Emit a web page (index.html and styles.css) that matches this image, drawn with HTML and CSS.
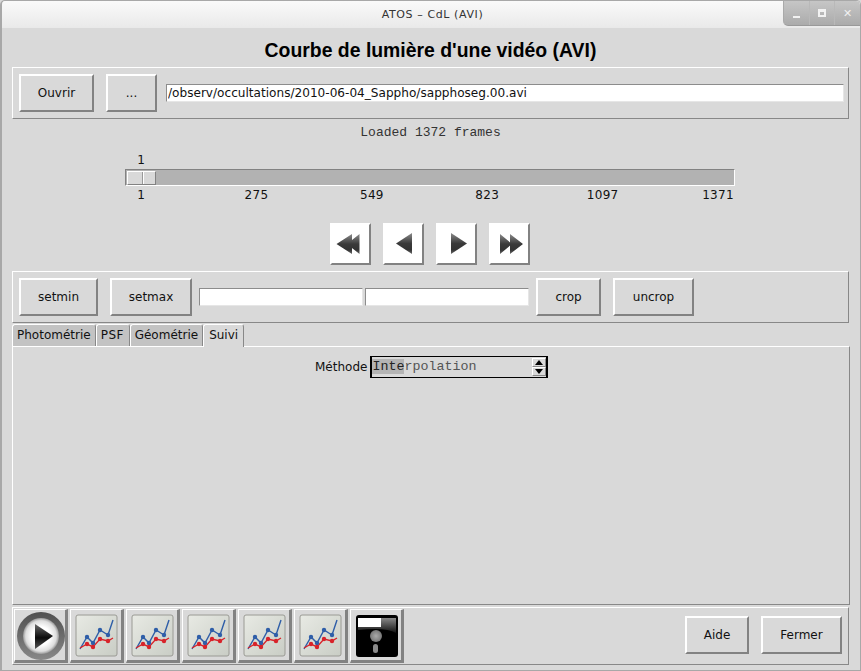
FILE: index.html
```html
<!DOCTYPE html>
<html lang="fr">
<head>
    <meta charset="UTF-8">
    <title>ATOS - CdL (AVI)</title>
    <link rel="stylesheet" href="styles.css">
</head>
<body>
    <svg class="defs" width="0" height="0">
        <defs>
            <linearGradient id="arrowFill" x1="0" y1="0" x2="0" y2="1">
                <stop offset="0" stop-color="#8a8a8a"/>
                <stop offset="0.5" stop-color="#3a3a3a"/>
                <stop offset="0.8" stop-color="#333"/>
                <stop offset="1" stop-color="#6a6a6a"/>
            </linearGradient>
            <linearGradient id="chartBg" x1="0" y1="0" x2="1" y2="1">
                <stop offset="0" stop-color="#e8eae4"/>
                <stop offset="1" stop-color="#c9cdc5"/>
            </linearGradient>
            <linearGradient id="ringFill" x1="0" y1="0" x2="0" y2="1">
                <stop offset="0" stop-color="#505050"/>
                <stop offset="1" stop-color="#888"/>
            </linearGradient>
            <radialGradient id="playBg">
                <stop offset="0.5" stop-color="#fff"/>
                <stop offset="0.85" stop-color="#ddd"/>
                <stop offset="1" stop-color="#999"/>
            </radialGradient>
            <linearGradient id="playArrow" x1="0" y1="0" x2="0" y2="1">
                <stop offset="0" stop-color="#6a6a6a"/>
                <stop offset="0.55" stop-color="#0c0c0c"/>
                <stop offset="1" stop-color="#555"/>
            </linearGradient>
            <linearGradient id="floppyTop" x1="0" y1="0" x2="0" y2="1">
                <stop offset="0" stop-color="#888"/>
                <stop offset="1" stop-color="#111"/>
            </linearGradient>
            <radialGradient id="floppyHub">
                <stop offset="0" stop-color="#aaa"/>
                <stop offset="1" stop-color="#777"/>
            </radialGradient>
            <symbol id="chart" viewBox="-2 -2 44 44">
                <rect x="0" y="0" width="41" height="41" rx="2" fill="url(#chartBg)" stroke="#9a9a94"/>
                <polyline points="4,34 11,22 17,28 24,15 32,20 37,5" fill="none" stroke="#2f5ea8" stroke-width="1.4"/>
                <polyline points="4,33 11,29 17,32 24,24 32,26 37,23" fill="none" stroke="#d8232a" stroke-width="1.4"/>
                <g fill="#2f5ea8">
                    <circle cx="11" cy="22" r="2.2"/><circle cx="17" cy="28" r="2.2"/>
                    <circle cx="24" cy="15" r="2.2"/><circle cx="32" cy="20" r="2.2"/>
                </g>
                <g fill="#d8232a">
                    <circle cx="11" cy="29" r="2.2"/><circle cx="17" cy="32" r="2.2"/>
                    <circle cx="24" cy="24" r="2.2"/><circle cx="32" cy="26" r="2.2"/>
                </g>
            </symbol>
        </defs>
    </svg>

    <div class="window">
        <div class="titlebar">
            <span class="titlebar-text">ATOS – CdL (AVI)</span>
            <div class="wm-buttons">
                <div class="wm-btn"><span class="wm-min"></span></div>
                <div class="wm-btn"><span class="wm-max"></span></div>
                <div class="wm-btn wm-close">✕</div>
            </div>
        </div>

        <h1>Courbe de lumière d'une vidéo (AVI)</h1>

        <!-- fichier -->
        <div class="frame row">
            <button class="btn w-ouvrir">Ouvrir</button>
            <button class="btn w-dots">...</button>
            <input class="entry entry-path" type="text" value="/observ/occultations/2010-06-04_Sappho/sapphoseg.00.avi">
        </div>

        <div class="status">Loaded 1372 frames</div>

        <!-- curseur -->
        <div class="scale">
            <div class="scale-value">1</div>
            <div class="trough"><div class="thumb"></div></div>
            <div class="ticks">
                <span>1</span><span>275</span><span>549</span><span>823</span><span>1097</span><span>1371</span>
            </div>
        </div>

        <div class="nav">
            <button class="nav-btn"><svg width="37" height="38" viewBox="0 0 37 38"><path d="M4.5 19 20 9V29ZM15 19 27.5 9V29Z" fill="url(#arrowFill)"/></svg></button>
            <button class="nav-btn"><svg width="37" height="38" viewBox="0 0 37 38"><path d="M11 18.5 27 8V29Z" fill="url(#arrowFill)"/></svg></button>
            <button class="nav-btn"><svg width="37" height="38" viewBox="0 0 37 38"><path d="M29 18.5 13 8V29Z" fill="url(#arrowFill)"/></svg></button>
            <button class="nav-btn"><svg width="37" height="38" viewBox="0 0 37 38"><path d="M9 9 21 19 9 29ZM19 9 32 19 19 29Z" fill="url(#arrowFill)"/></svg></button>
        </div>

        <!-- crop -->
        <div class="frame row">
            <button class="btn w-setmin">setmin</button>
            <button class="btn w-setmax">setmax</button>
            <input class="entry entry-crop entry-first" type="text">
            <input class="entry entry-crop" type="text">
            <button class="btn w-crop">crop</button>
            <button class="btn w-uncrop">uncrop</button>
        </div>

        <div class="tabs">
            <div class="tab">Photométrie</div>
            <div class="tab tab-psf">PSF</div>
            <div class="tab">Géométrie</div>
            <div class="tab tab-active">Suivi</div>
        </div>
        <div class="panel">
            <div class="method">
                <span class="method-label">Méthode</span>
                <div class="spinbox">
                    <span class="spin-text"><span class="spin-sel">Inte</span>rpolation</span>
                    <div class="spin-arrows">
                        <div class="spin-arrow"><svg width="8" height="5" viewBox="0 0 8 5"><path d="M4 0 8 5H0Z" fill="#000"/></svg></div>
                        <div class="spin-arrow"><svg width="8" height="5" viewBox="0 0 8 5"><path d="M4 5 8 0H0Z" fill="#000"/></svg></div>
                    </div>
                </div>
            </div>
        </div>

        <!-- barre du bas -->
        <div class="frame bottom">
            <button class="icon-btn">
                <svg width="50" height="50" viewBox="0 0 50 50">
                    <circle cx="26" cy="26" r="24" fill="url(#ringFill)"/>
                    <circle cx="26" cy="26" r="18" fill="url(#playBg)"/>
                    <path d="M20 14 38 26 20 39Z" fill="url(#playArrow)"/>
                </svg>
            </button>
            <button class="icon-btn"><svg width="44" height="44"><use href="#chart"/></svg></button>
            <button class="icon-btn"><svg width="44" height="44"><use href="#chart"/></svg></button>
            <button class="icon-btn"><svg width="44" height="44"><use href="#chart"/></svg></button>
            <button class="icon-btn"><svg width="44" height="44"><use href="#chart"/></svg></button>
            <button class="icon-btn"><svg width="44" height="44"><use href="#chart"/></svg></button>
            <button class="icon-btn">
                <svg width="44" height="44" viewBox="-2 -2 44 44">
                    <rect x="0" y="0" width="42" height="42" rx="3" fill="#000"/>
                    <path d="M25 3H40V18Q30 12 2 15V12H25Z" fill="url(#floppyTop)"/>
                    <rect x="2" y="3" width="23" height="9" fill="#fff"/>
                    <circle cx="20" cy="21" r="6" fill="url(#floppyHub)"/>
                    <rect x="17" y="29" width="5" height="9" rx="2.5" fill="#8a8a8a"/>
                </svg>
            </button>
            <div class="spacer"></div>
            <button class="btn w-aide">Aide</button>
            <button class="btn w-fermer">Fermer</button>
        </div>
    </div>
</body>
</html>
```

FILE: styles.css
```css
html, body {
    margin: 0;
    padding: 0;
    height: 671px;
    overflow: hidden;
}

body {
    font-family: "DejaVu Sans", sans-serif;
    font-size: 12px;
    color: #111;
    background: #d9d9d9;
}

.defs {
    position: absolute;
}

.window {
    box-sizing: border-box;
    height: 671px;
    border-left: 2px solid #a8a8a8;
    border-right: 1px solid #a8a8a8;
    border-bottom: 1px solid #a8a8a8;
    border-top: 1px solid #a8a8a8;
    border-radius: 5px 5px 0 0;
    padding-left: 10px;
    overflow: hidden;
}

.titlebar {
    position: relative;
    height: 27px;
    margin-left: -10px;
    background: linear-gradient(#fafafa, #e9e9e9);
    display: flex;
    justify-content: center;
    align-items: center;
    padding-left: 3px;
}

.titlebar-text {
    font-size: 11px;
    letter-spacing: 0.6px;
    color: #333;
}

.wm-buttons {
    position: absolute;
    top: 0;
    right: 0;
    width: 76px;
    height: 24px;
    display: flex;
    background: linear-gradient(#c6c6c6, #ababab);
    border-bottom: 1px solid #999;
    border-left: 1px solid #aaa;
    border-radius: 0 0 0 5px;
}

.wm-btn {
    flex: 1;
    display: flex;
    align-items: center;
    justify-content: center;
    border-right: 1px solid #b9b9b9;
    color: #f0f0f0;
}

.wm-btn:last-child {
    border-right: none;
}

.wm-min {
    width: 7px;
    height: 2px;
    margin-top: 8px;
    background: #f2f2f2;
}

.wm-max {
    box-sizing: border-box;
    width: 8px;
    height: 8px;
    border: 2px solid #f2f2f2;
    border-top-width: 3px;
}

.wm-close {
    font-size: 11px;
    font-weight: bold;
}

h1 {
    margin: 0;
    height: 39px;
    line-height: 44px;
    width: 837px;
    text-align: center;
    font-family: "Liberation Sans", sans-serif;
    font-size: 19.4px;
    font-weight: bold;
    color: #000;
}

.frame {
    box-sizing: border-box;
    width: 837px;
    height: 52px;
    border: 1px solid;
    border-color: #fff #888 #888 #fff;
    display: flex;
    align-items: center;
}

.row {
    padding-left: 6px;
}

.btn {
    box-sizing: border-box;
    height: 38px;
    padding: 0;
    border: 2px solid;
    border-color: #fff #828282 #828282 #fff;
    background: #d9d9d9;
    font-family: inherit;
    font-size: 12px;
    color: #111;
}

.w-ouvrir { width: 75px; margin-right: 12px; }
.w-dots { width: 51px; margin-right: 9px; }
.w-setmin { width: 79px; margin-right: 12px; }
.w-setmax { width: 82px; margin-right: 7px; }
.w-crop { width: 65px; margin: 0 12px 0 7px; }
.w-uncrop { width: 81px; }
.w-aide { width: 64px; margin: 0 12px 2px 0; }
.w-fermer { width: 81px; margin: 0 6px 2px 0; }

.entry {
    box-sizing: border-box;
    height: 18px;
    padding: 0 1px;
    background: #fff;
    border: 1px solid;
    border-color: #8c8c8c #e6e6e6 #e6e6e6 #8c8c8c;
    font-family: inherit;
    font-size: 12.1px;
    color: #111;
    outline: none;
}

.entry-path { width: 678px; }
.entry-crop { width: 164px; }
.entry-first { margin-right: 2px; }

.status {
    width: 837px;
    height: 27px;
    line-height: 27px;
    text-align: center;
    font-family: "Liberation Mono", monospace;
    font-size: 13px;
    color: #333;
}

.scale {
    width: 837px;
    padding-left: 113px;
    box-sizing: border-box;
}

.scale-value {
    height: 16px;
    margin-top: 7px;
    line-height: 15px;
    margin-left: 12px;
    width: 8px;
    text-align: center;
}

.trough {
    box-sizing: border-box;
    width: 610px;
    height: 17px;
    padding: 1px;
    background: #b2b2b2;
    border: 1px solid;
    border-color: #828282 #fff #fff #828282;
    display: flex;
}

.thumb {
    box-sizing: border-box;
    width: 29px;
    height: 14px;
    background: linear-gradient(to right, #d9d9d9 14px, #999 14px, #999 15px, #fff 15px, #fff 16px, #d9d9d9 16px);
    border: 1px solid;
    border-color: #fff #828282 #828282 #fff;
}

.ticks {
    display: flex;
    margin-left: -41.6px;
    height: 18px;
    line-height: 18px;
    letter-spacing: 0.3px;
}

.ticks span {
    width: 115.4px;
    flex: none;
    text-align: center;
}

.nav {
    width: 837px;
    height: 42px;
    margin-top: 19px;
    margin-bottom: 6px;
    padding-left: 318px;
    box-sizing: border-box;
    display: flex;
    gap: 12px;
}

.nav-btn {
    box-sizing: border-box;
    width: 41px;
    height: 42px;
    padding: 0;
    background: #fff;
    border: 2px solid;
    border-color: #fff #828282 #828282 #fff;
    display: flex;
    align-items: center;
    justify-content: center;
}

.tabs {
    display: flex;
    width: 838px;
    height: 22px;
    margin-top: 1px;
}

.tab {
    box-sizing: border-box;
    height: 22px;
    line-height: 21px;
    padding: 0 4px;
    background: #c3c3c3;
    border: 1px solid;
    border-color: #fff #888 transparent #fff;
    border-bottom: none;
    border-radius: 3px 3px 0 0;
}

.tab-psf {
    width: 34px;
    letter-spacing: 0.5px;
}

.tab-active {
    background: #d9d9d9;
    width: 41px;
    height: 23px;
    padding: 0 5px;
    position: relative;
    z-index: 1;
}

.panel {
    box-sizing: border-box;
    width: 838px;
    height: 259px;
    border: 1px solid;
    border-color: #fff #888 #888 #fff;
    padding-top: 9px;
    padding-left: 302px;
}

.method {
    display: flex;
    align-items: center;
    gap: 3px;
}

.spinbox {
    box-sizing: border-box;
    width: 178px;
    height: 22px;
    border: 2px solid #000;
    border-top-width: 1px;
    border-bottom-width: 1px;
    display: flex;
    align-items: center;
    justify-content: space-between;
}

.spin-text {
    font-family: "Liberation Mono", monospace;
    font-size: 13.33px;
    color: #555;
    line-height: 18px;
}

.spin-sel {
    background: #b4b4b4;
    color: #222;
}

.spin-arrows {
    width: 14px;
    display: flex;
    flex-direction: column;
    margin-right: 0;
}

.spin-arrow {
    box-sizing: border-box;
    height: 9px;
    display: flex;
    align-items: center;
    justify-content: center;
    border: 1px solid;
    border-color: #fff #888 #888 #fff;
}

.bottom {
    height: 58px;
    margin-top: 2px;
    padding-left: 1px;
}

.icon-btn {
    box-sizing: border-box;
    width: 54px;
    height: 54px;
    margin-right: 2px;
    padding: 0;
    background: #d9d9d9;
    border: 1px solid;
    border-color: #fff #828282 #828282 #fff;
    border-width: 1px 3px 3px 1px;
    display: flex;
    align-items: center;
    justify-content: center;
}

.spacer {
    flex: 1;
}
```
